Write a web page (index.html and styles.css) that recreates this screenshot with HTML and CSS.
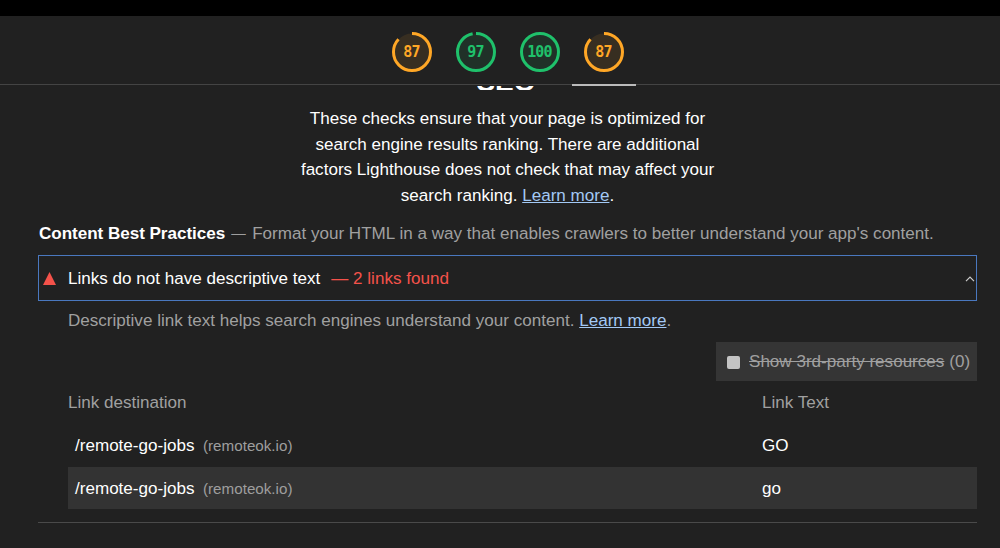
FILE: index.html
```html
<!DOCTYPE html>
<html lang="en">
<head>
<meta charset="utf-8">
<title>Lighthouse report</title>
<link rel="stylesheet" href="styles.css">
</head>
<body>
<div class="topbar"></div>
<header class="scores">
  <div class="gauge orange">
    <svg viewBox="0 0 40 40" width="40" height="40"><circle class="fill" cx="20" cy="20" r="18.5"/><circle class="arc" cx="20" cy="20" r="18.5" pathLength="100" stroke-dasharray="87 100" transform="rotate(-90 20 20)"/></svg>
    <span class="num">87</span>
  </div>
  <div class="gauge green">
    <svg viewBox="0 0 40 40" width="40" height="40"><circle class="fill" cx="20" cy="20" r="18.5"/><circle class="arc" cx="20" cy="20" r="18.5" pathLength="100" stroke-dasharray="97 100" transform="rotate(-90 20 20)"/></svg>
    <span class="num">97</span>
  </div>
  <div class="gauge green">
    <svg viewBox="0 0 40 40" width="40" height="40"><circle class="fill" cx="20" cy="20" r="18.5"/><circle class="arc" cx="20" cy="20" r="18.5" pathLength="100" stroke-dasharray="100 100" transform="rotate(-90 20 20)"/></svg>
    <span class="num">100</span>
  </div>
  <div class="gauge orange active">
    <svg viewBox="0 0 40 40" width="40" height="40"><circle class="fill" cx="20" cy="20" r="18.5"/><circle class="arc" cx="20" cy="20" r="18.5" pathLength="100" stroke-dasharray="87 100" transform="rotate(-90 20 20)"/></svg>
    <span class="num">87</span>
  </div>
</header>
<main class="content">
  <div class="title-clip"><h1 class="title">SEO</h1></div>
  <p class="intro">These checks ensure that your page is optimized for search engine results ranking. There are additional factors Lighthouse does not check that may affect your search ranking. <a href="#">Learn more</a>.</p>
  <div class="group-head"><strong>Content Best Practices</strong><span class="dash">—</span><span class="group-desc">Format your HTML in a way that enables crawlers to better understand your app's content.</span></div>
  <section class="audit">
    <div class="audit-head">
      <svg class="tri" viewBox="0 0 13 13" width="13" height="13"><path d="M6.5 0L13 13H0Z"/></svg>
      <span class="audit-title">Links do not have descriptive text</span>
      <span class="audit-fail">— 2 links found</span>
      <svg class="chev" viewBox="0 0 10 6" width="10" height="6"><path d="M1 5.2L5 1.2L9 5.2"/></svg>
    </div>
    <div class="audit-body">
      <p class="audit-desc">Descriptive link text helps search engines understand your content. <a href="#">Learn more</a>.</p>
      <div class="filter-row">
        <div class="filter"><span class="check"></span><span class="filter-label">Show 3rd-party resources</span><span class="count">(0)</span></div>
      </div>
      <div class="row head"><div class="col-a">Link destination</div><div class="col-b">Link Text</div></div>
      <div class="row"><div class="col-a url">/remote-go-jobs<span class="host">(remoteok.io)</span></div><div class="col-b val">GO</div></div>
      <div class="row alt"><div class="col-a url">/remote-go-jobs<span class="host">(remoteok.io)</span></div><div class="col-b val">go</div></div>
    </div>
  </section>
  <hr class="rule">
</main>
</body>
</html>
```
FILE: styles.css
```css
* { box-sizing: border-box; }
html, body { margin: 0; padding: 0; }
body {
  width: 1000px;
  height: 548px;
  overflow: hidden;
  background: #212121;
  color: #fff;
  font-family: "Liberation Sans", Arial, sans-serif;
  font-size: 17.07px;
}
a { color: #a3c9f5; text-decoration: underline; }
.topbar { height: 16px; background: #000; }
.scores {
  height: 69px;
  border-bottom: 1px solid #444;
  display: flex;
  justify-content: center;
  align-items: flex-start;
  gap: 24px;
  padding-top: 16px;
  padding-left: 15px;
}
.gauge { position: relative; width: 40px; height: 40px; }
.gauge svg { display: block; }
.gauge .fill { stroke: none; }
.gauge .arc { fill: none; stroke-width: 3; }
.gauge .num {
  position: absolute;
  inset: 0;
  display: flex;
  align-items: center;
  justify-content: center;
  font-family: "DejaVu Sans Mono", monospace;
  font-size: 15px;
  letter-spacing: -0.8px;
  font-weight: 700;
}
.orange .arc { stroke: #ffa726; }
.orange .fill { fill: rgba(255,167,38,.1); }
.orange .num { color: #ffa726; }
.green .arc { stroke: #1fc16b; }
.green .fill { fill: rgba(31,193,107,.1); }
.green .num { color: #1fc16b; }
.active::after {
  content: "";
  position: absolute;
  left: -12px;
  right: -12px;
  top: 52px;
  height: 2px;
  background: #bbb;
}
.content { padding: 0 23px 0 38px; }
.title-clip { height: 4px; margin-top: 1px; overflow: hidden; display: flex; justify-content: center; align-items: flex-end; }
.title { margin: 0 3px -6px 0; font-size: 28px; font-weight: 700; line-height: 1; flex: none; }
.intro {
  width: 420px;
  margin: 16px auto 0;
  text-align: center;
  line-height: 25.5px;
}
.group-head { margin-top: 13px; padding-left: 1px; height: 25px; line-height: 25px; white-space: nowrap; display: flex; }
.group-head strong { font-weight: 700; letter-spacing: -0.03px; }
.dash { color: #9e9e9e; margin: 0 6.5px 0 6px; font-size: 14.5px; }
.group-desc { color: #a0a0a0; }
.audit { margin-top: 9px; }
.audit-head {
  height: 46px;
  border: 1px solid #4a78bf;
  display: flex;
  align-items: center;
  padding: 1px 0 0 4px;
}
.tri { fill: #f4524a; flex: none; }
.audit-title { margin-left: 12px; }
.audit-fail { margin-left: 11px; color: #f4524a; }
.chev { margin-left: auto; margin-right: 1px; fill: none; stroke: #ccc; stroke-width: 1.2; }
.audit-body { padding-left: 30px; }
.audit-desc { margin: 0; padding-top: 7px; line-height: 25px; color: #a0a0a0; }
.filter-row { display: flex; justify-content: flex-end; margin: 9px 0 1px; }
.filter {
  width: 261px;
  height: 39px;
  background: #353535;
  display: flex;
  align-items: center;
  padding: 1px 0 0 11px;
  color: #a0a0a0;
  white-space: nowrap;
}
.check { width: 13px; height: 13px; background: #c4c4c4; border-radius: 2px; margin-right: 9px; flex: none; }
.filter-label { text-decoration: line-through; }
.count { margin-left: 5px; }
.row { display: flex; height: 43px; align-items: center; }
.row.alt { height: 42px; padding-top: 1px; background: #333; }
.row.head { height: 42px; color: #a0a0a0; }
.col-a { width: 694px; flex: none; }
.url { padding-left: 7px; }
.host { margin-left: 8.5px; color: #9e9e9e; font-size: 15.2px; }
.rule { border: 0; height: 1px; background: #4a4a4a; margin: 13px 0 0; }
```
